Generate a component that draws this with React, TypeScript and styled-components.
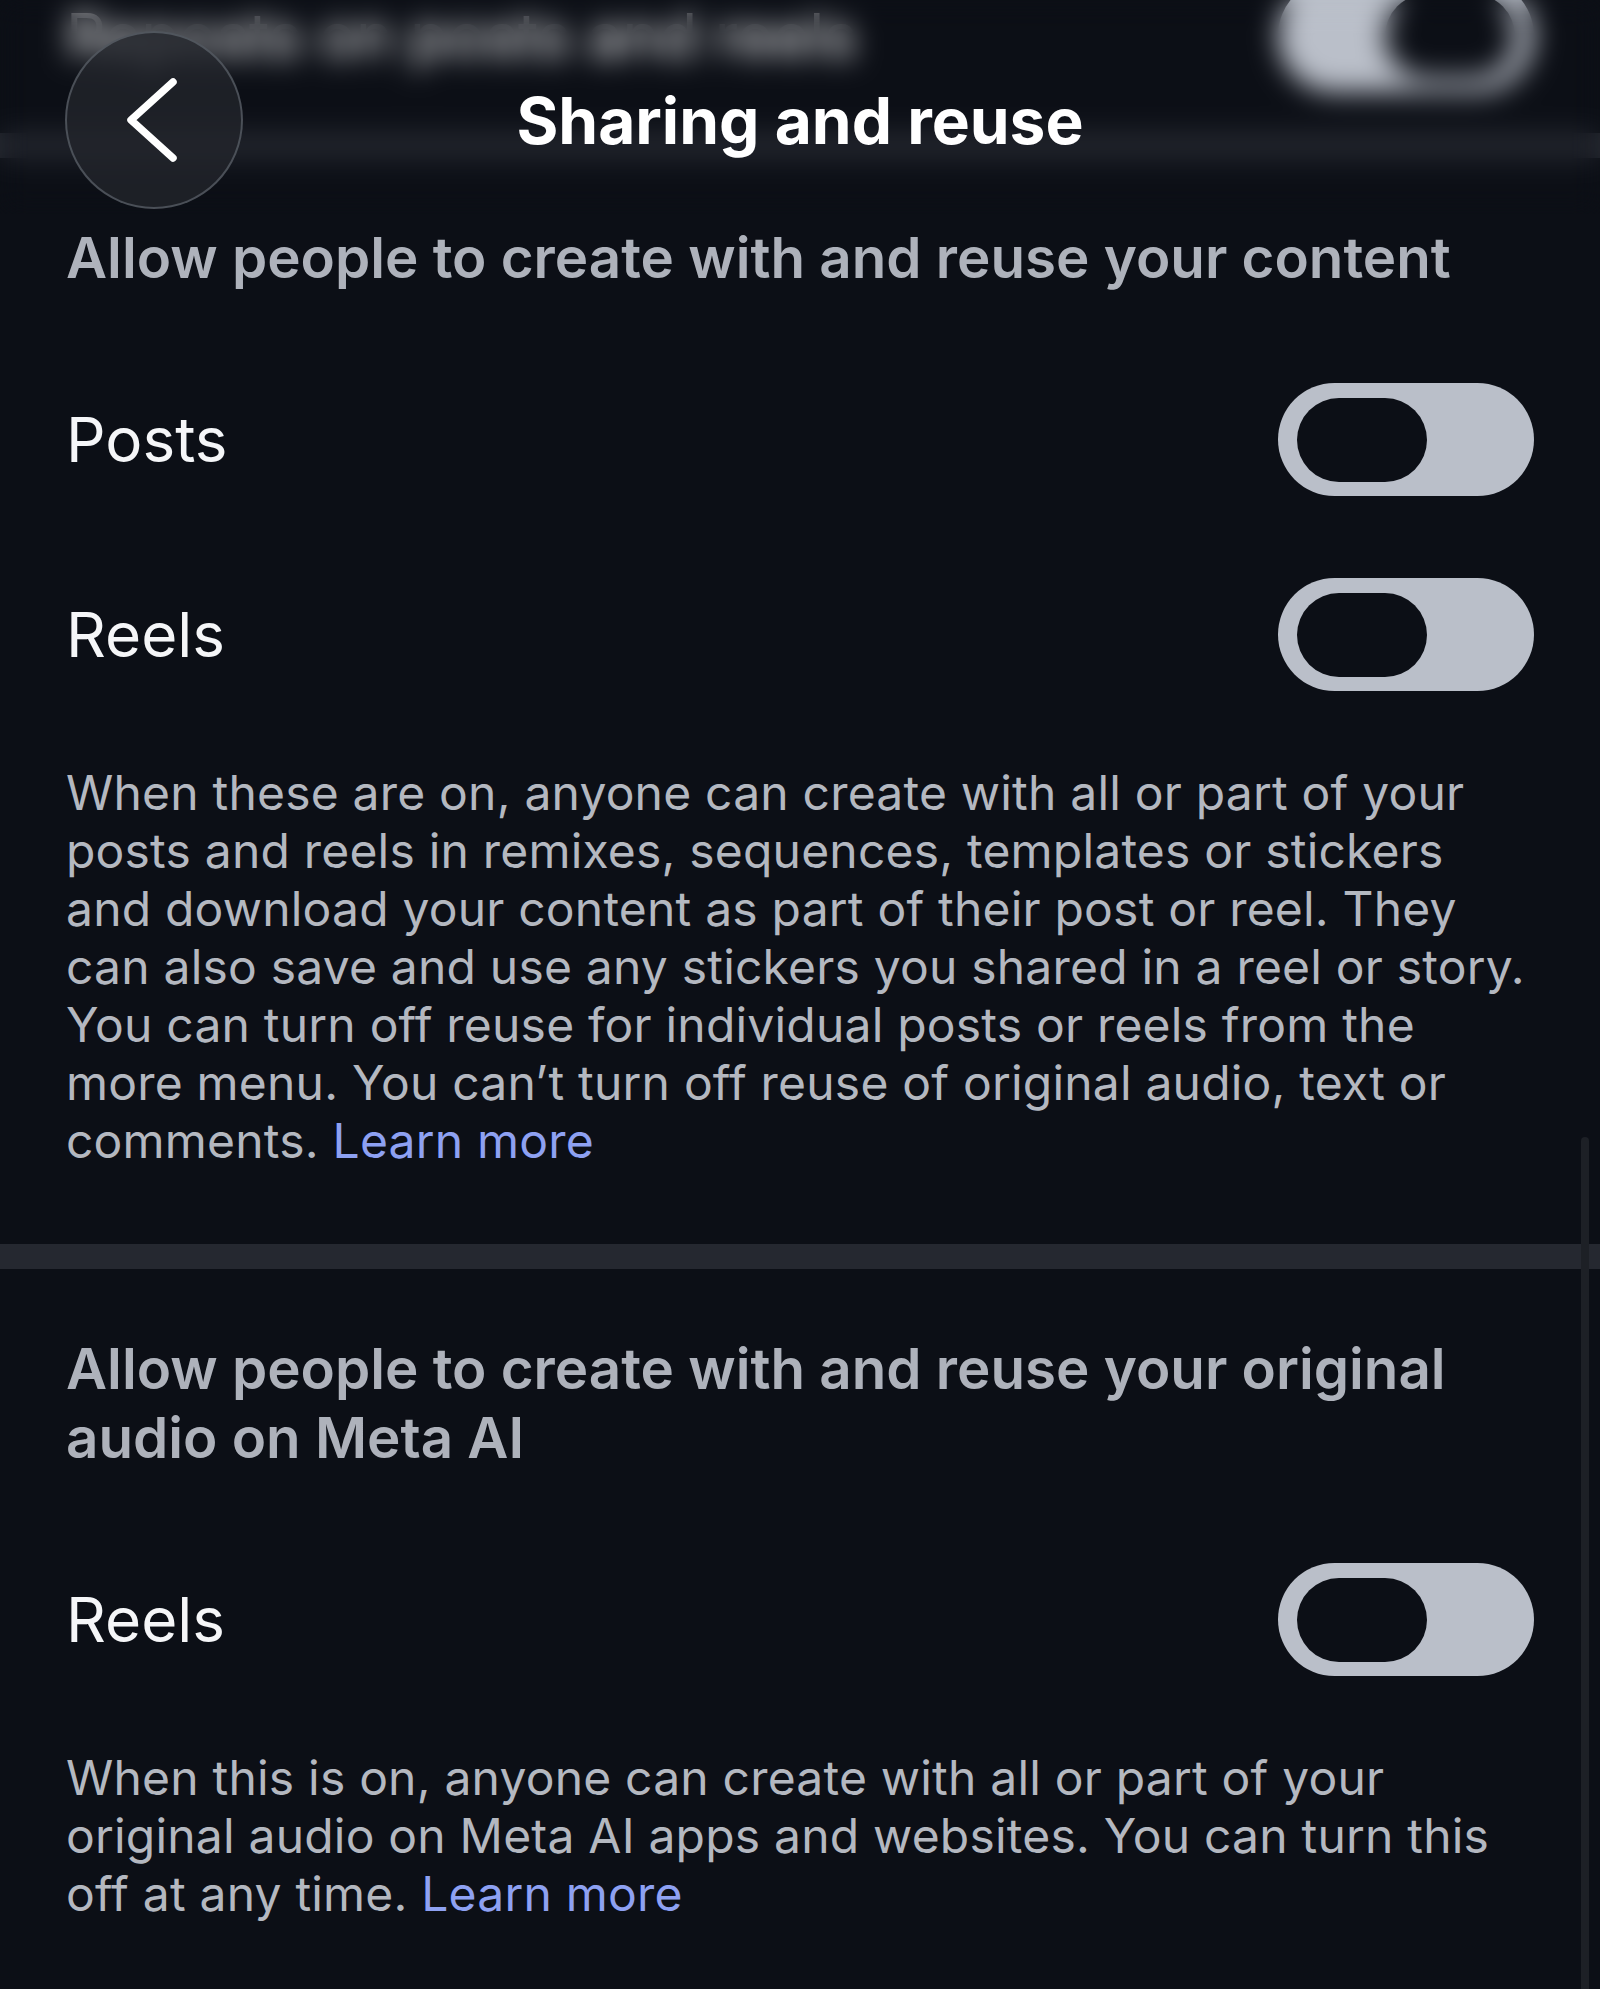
import styled, { createGlobalStyle } from 'styled-components'

const GlobalStyle = createGlobalStyle`
  html, body {
    margin: 0;
    padding: 0;
    background: #0c0f16;
  }
  body {
    font-family: Inter, "Noto Sans", sans-serif;
    -webkit-font-smoothing: antialiased;
  }
`

const Screen = styled.div`
  position: relative;
  width: 1600px;
  height: 1989px;
  overflow: hidden;
  background: #0c0f16;
`

// frosted nav bar that floats over the scrolled list
const Header = styled.header`
  position: absolute;
  top: 0;
  left: 0;
  right: 0;
  height: 214px;
  padding: 31px 65px 0;
  box-sizing: border-box;
  display: grid;
  grid-template-columns: 1fr auto 1fr;
  align-items: start;
  backdrop-filter: blur(14px);
  z-index: 2;
`

const BackButton = styled.button`
  width: 178px;
  height: 178px;
  border-radius: 50%;
  border: 2px solid rgba(112, 118, 128, 0.55);
  background: rgba(34, 37, 44, 0.78);
  display: flex;
  align-items: center;
  justify-content: center;
  padding: 0;
  box-sizing: border-box;
  svg {
    margin-left: -4px;
  }
`

const Title = styled.h1`
  margin: 0;
  height: 178px;
  display: flex;
  align-items: center;
  font-size: 64px;
  font-weight: 700;
  color: #ffffff;
`

const Scroller = styled.main`
  margin-top: -62px;
`

const Section = styled.section<{ $top?: number; $bottom?: number }>`
  padding: ${(p) => p.$top ?? 65}px 66px ${(p) => p.$bottom ?? 74}px;
`

const Divider = styled.div`
  height: 25px;
  background: #252830;
`

const Heading = styled.h2`
  margin: 0 0 50px;
  font-size: 56.5px;
  line-height: 69px;
  font-weight: 600;
  color: #aeb2bb;
`

const Row = styled.div`
  height: 195px;
  display: flex;
  align-items: center;
  justify-content: space-between;
`

const RowLabel = styled.span`
  font-size: 62px;
  color: #f5f6f8;
`

const Track = styled.div<{ $on?: boolean }>`
  width: 256px;
  height: 113px;
  flex-shrink: 0;
  border-radius: 57px;
  background: #babfc9;
  padding: 0 19px;
  box-sizing: border-box;
  display: flex;
  align-items: center;
  justify-content: ${(p) => (p.$on ? 'flex-end' : 'flex-start')};
`

const Knob = styled.div`
  width: 130px;
  height: 84px;
  border-radius: 42px;
  background: #0c0f16;
`

const Body = styled.p`
  margin: 32px 0 0;
  font-size: 48px;
  line-height: 58px;
  letter-spacing: 0.2px;
  white-space: nowrap;
  color: #b4b8c0;
`

const LearnMore = styled.a`
  color: #8ea1f2;
  text-decoration: none;
`

const ScrollIndicator = styled.div`
  position: absolute;
  right: 11px;
  top: 1137px;
  bottom: -20px;
  width: 8px;
  border-radius: 4px;
  background: #1d2026;
`

function Toggle({ on }: { on?: boolean }) {
  return (
    <Track $on={on}>
      <Knob />
    </Track>
  )
}

function ChevronLeft() {
  return (
    <svg width="50" height="84" viewBox="0 0 50 84" fill="none">
      <path d="M46 4 L4 42 L46 80" stroke="#fff" strokeWidth="7.5" strokeLinecap="round" strokeLinejoin="round" />
    </svg>
  )
}

export default function App() {
  return (
    <>
      <GlobalStyle />
      <Screen>
        <Scroller>
          <Section $top={0} $bottom={0}>
            <Row>
              <RowLabel>Reposts on posts and reels</RowLabel>
              <Toggle on />
            </Row>
          </Section>
          <Divider />
          <Section>
            <Heading>Allow people to create with and reuse your content</Heading>
            <Row>
              <RowLabel>Posts</RowLabel>
              <Toggle />
            </Row>
            <Row>
              <RowLabel>Reels</RowLabel>
              <Toggle />
            </Row>
            <Body>
              When these are on, anyone can create with all or part of your
              <br />
              posts and reels in remixes, sequences, templates or stickers
              <br />
              and download your content as part of their post or reel. They
              <br />
              can also save and use any stickers you shared in a reel or story.
              <br />
              You can turn off reuse for individual posts or reels from the
              <br />
              more menu. You can’t turn off reuse of original audio, text or
              <br />
              comments. <LearnMore href="#">Learn more</LearnMore>
            </Body>
          </Section>
          <Divider />
          <Section>
            <Heading>Allow people to create with and reuse your original audio on Meta AI</Heading>
            <Row>
              <RowLabel>Reels</RowLabel>
              <Toggle />
            </Row>
            <Body>
              When this is on, anyone can create with all or part of your
              <br />
              original audio on Meta AI apps and websites. You can turn this
              <br />
              off at any time. <LearnMore href="#">Learn more</LearnMore>
            </Body>
          </Section>
        </Scroller>
        <Header>
          <BackButton aria-label="Back">
            <ChevronLeft />
          </BackButton>
          <Title>Sharing and reuse</Title>
          <span />
        </Header>
        <ScrollIndicator />
      </Screen>
    </>
  )
}
